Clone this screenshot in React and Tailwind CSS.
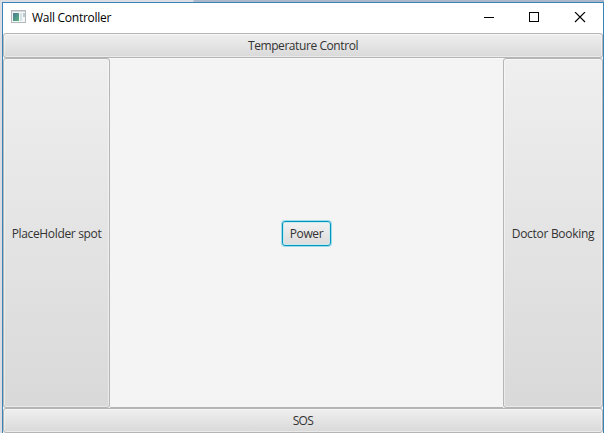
const face =
  "border border-[#b5b5b5] rounded-[3px] bg-linear-to-b from-[#efefef] to-[#d9d9d9] shadow-[inset_0_0_0_1px_rgba(255,255,255,0.45)] flex items-center justify-center text-[#333] text-[12px] leading-4 whitespace-nowrap";

function PaneButton({ className = "", textClass = "", children }) {
  return (
    <button type="button" className={`${face} ${className}`}>
      <span className={textClass}>{children}</span>
    </button>
  );
}

function AppIcon() {
  return (
    <svg width="15" height="13" viewBox="0 0 15 13" className="mb-[2px] shrink-0">
      <defs>
        <linearGradient id="pane" x1="0" y1="0" x2="1" y2="1">
          <stop offset="0" stopColor="#4a7897" />
          <stop offset="1" stopColor="#58b47c" />
        </linearGradient>
      </defs>
      <rect x="0.5" y="0.5" width="14" height="12" fill="#f4f6f7" stroke="#b4b8bb" />
      <rect x="1" y="1" width="13" height="1" fill="#d2d8dc" />
      <rect x="2" y="3" width="6" height="8" fill="url(#pane)" />
      <rect x="9" y="3" width="2" height="8" fill="#d5e2e6" />
      <rect x="12" y="3" width="2" height="4" fill="#bccbd2" />
    </svg>
  );
}

function TitleBar() {
  return (
    <header className="flex h-[30px] shrink-0 items-center bg-white pb-px pl-2 text-black">
      <AppIcon />
      <span className="ml-[6px] pt-px text-[12px] leading-4 tracking-[-0.27px]">Wall Controller</span>
      <div className="ml-auto flex items-center pr-[17px]">
        <svg width="102" height="11" viewBox="0 0 102 11" fill="none" stroke="#000" shapeRendering="crispEdges">
          <path d="M0 5.5h10" />
          <rect x="45.5" y="0.5" width="9" height="9" />
          <path d="M91 0l10 10M101 0l-10 10" shapeRendering="auto" strokeWidth="1.1" />
        </svg>
      </div>
    </header>
  );
}

export default function App() {
  return (
    <div className="h-[433px] w-[604px] overflow-hidden bg-linear-to-r from-[#dcdee3] from-[193px] to-[#a9b7c8] to-[194px] pl-[2px] pt-[2px] font-['Open_Sans','Noto_Sans',sans-serif]">
      <div className="flex h-[431px] w-[602px] flex-col border-x border-t border-[#3983b7] bg-[#f4f4f4]">
        <TitleBar />
        <PaneButton className="h-[25px] shrink-0" textClass="tracking-[-0.42px]">Temperature Control</PaneButton>
        <main className="flex h-[350px] shrink-0">
          <PaneButton className="w-[107px] shrink-0" textClass="pt-[2px] tracking-[-0.34px]">PlaceHolder spot</PaneButton>
          <section className="flex flex-1 items-center justify-center border-b border-t border-b-[#b5b5b5] border-t-[#f9f9f9]">
            <button
              type="button"
              className="flex h-[25px] w-[49px] items-center justify-center rounded-[3px] border border-[#0396bd] bg-linear-to-b from-[#f2f2f2] to-[#dcdcdc] text-[12px] leading-4 text-[#333] shadow-[0_0_0_1px_#9edcec,inset_0_0_0_1px_#c9e9f0]"
            >
              <span className="pt-[2px] tracking-[-0.4px]">Power</span>
            </button>
          </section>
          <PaneButton className="w-[100px] shrink-0" textClass="pt-[2px] tracking-[-0.3px]">Doctor Booking</PaneButton>
        </main>
        <PaneButton className="h-[25px] shrink-0" textClass="tracking-[-0.6px]">SOS</PaneButton>
      </div>
    </div>
  );
}
